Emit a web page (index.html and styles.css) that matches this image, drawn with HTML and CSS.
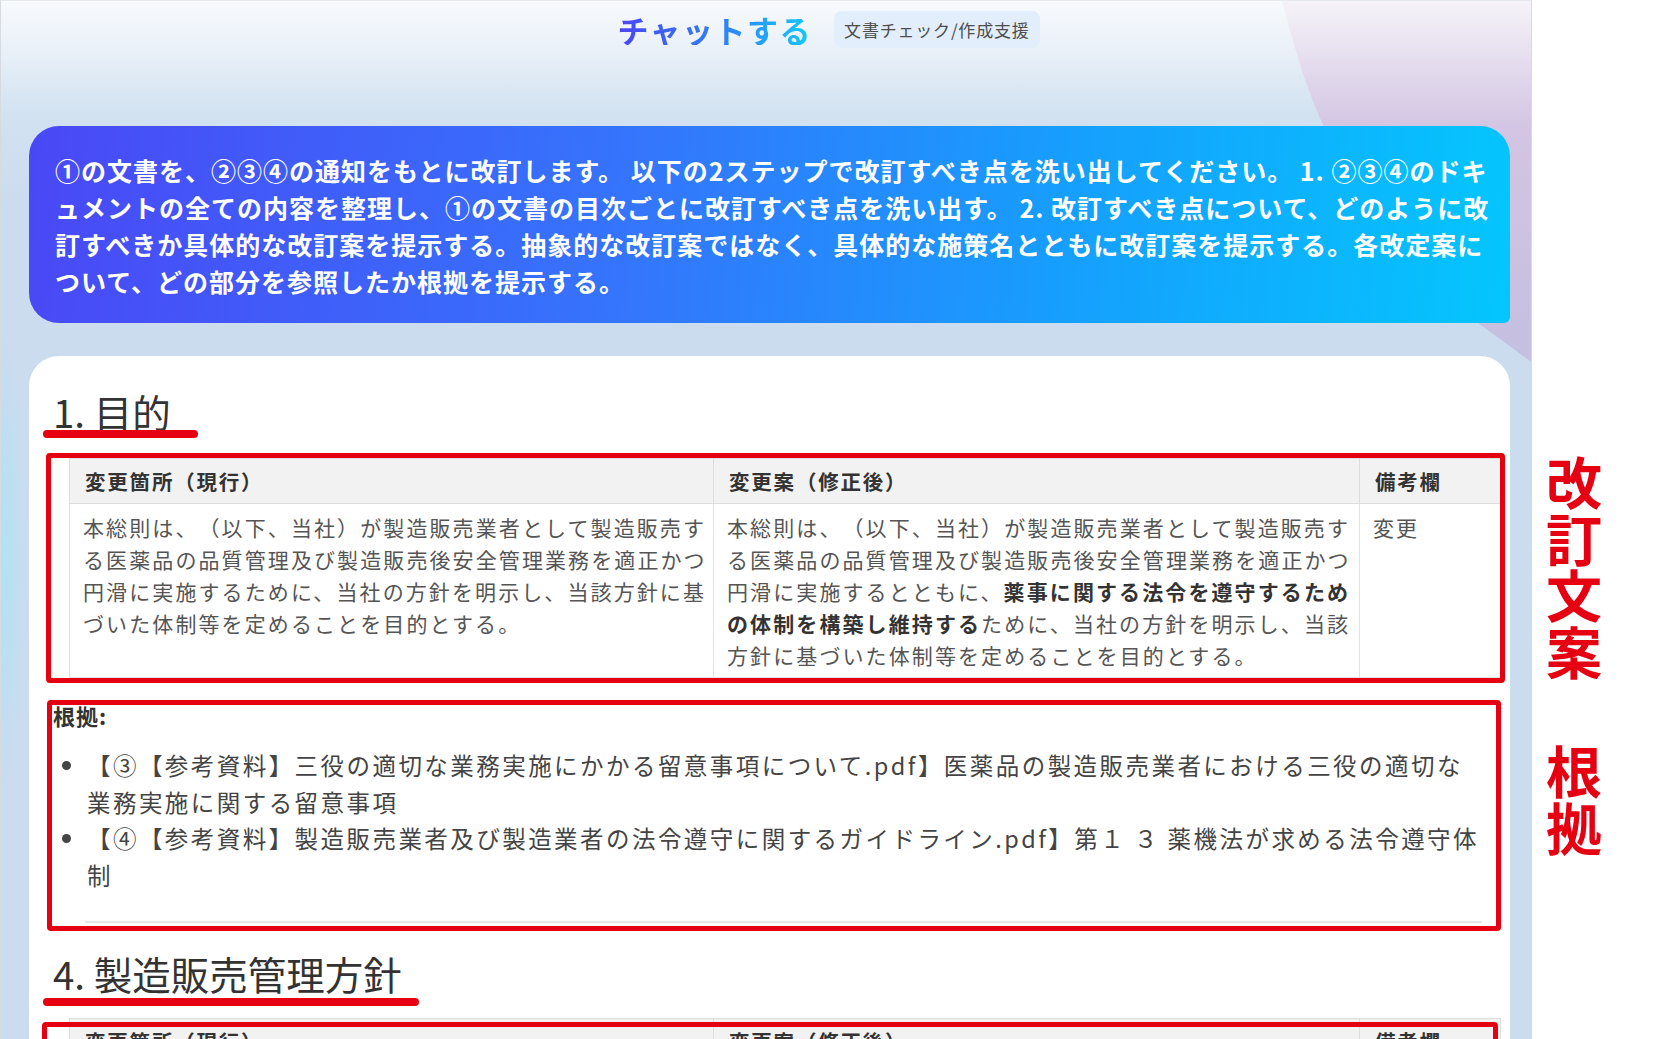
FILE: index.html
```html
<!DOCTYPE html>
<html lang="ja">
<head>
<meta charset="utf-8">
<title>チャットする</title>
<link rel="stylesheet" href="styles.css">
</head>
<body>
<div class="page">
  <main class="app">
    <svg class="app-deco" viewBox="0 0 1532 400" width="1532" height="400" aria-hidden="true">
      <defs>
        <linearGradient id="lav" x1="0" y1="0" x2="0" y2="362" gradientUnits="userSpaceOnUse">
          <stop offset="0" stop-color="#f5f3f8"/>
          <stop offset="0.35" stop-color="#d3c5e3"/>
          <stop offset="1" stop-color="#c4bfe0"/>
        </linearGradient>
      </defs>
      <path d="M1281 0 C1293 45 1306 92 1326 132 L1440 295 L1532 362 L1532 0 Z" fill="url(#lav)"/>
    </svg>

    <header class="topbar">
      <h1 class="title">チャットする</h1>
      <span class="mode-pill">文書チェック/作成支援</span>
    </header>

    <div class="user-msg">
      <p>①の文書を、②③④の通知をもとに改訂します。 以下の2ステップで改訂すべき点を洗い出してください。 1. ②③④のドキ<br>ュメントの全ての内容を整理し、①の文書の目次ごとに改訂すべき点を洗い出す。 2. 改訂すべき点について、どのように改<br>訂すべきか具体的な改訂案を提示する。抽象的な改訂案ではなく、具体的な施策名とともに改訂案を提示する。各改定案に<br>ついて、どの部分を参照したか根拠を提示する。</p>
    </div>

    <article class="answer">
      <h2 class="sec-title sec-title--purpose">1. 目的</h2>

      <div class="revision">
        <table class="rev-table">
          <colgroup><col class="c-old"><col class="c-new"><col class="c-note"></colgroup>
          <thead>
            <tr><th>変更箇所（現行）</th><th>変更案（修正後）</th><th>備考欄</th></tr>
          </thead>
          <tbody>
            <tr>
              <td>本総則は、（以下、当社）が製造販売業者として製造販売す<br>る医薬品の品質管理及び製造販売後安全管理業務を適正かつ<br>円滑に実施するために、当社の方針を明示し、当該方針に基<br>づいた体制等を定めることを目的とする。</td>
              <td>本総則は、（以下、当社）が製造販売業者として製造販売す<br>る医薬品の品質管理及び製造販売後安全管理業務を適正かつ<br>円滑に実施するとともに、<strong>薬事に関する法令を遵守するため<br>の体制を構築し維持する</strong>ために、当社の方針を明示し、当該<br>方針に基づいた体制等を定めることを目的とする。</td>
              <td>変更</td>
            </tr>
          </tbody>
        </table>
      </div>

      <section class="basis">
        <p class="basis-label">根拠:</p>
        <ul class="basis-list">
          <li>【③【参考資料】三役の適切な業務実施にかかる留意事項について.pdf】医薬品の製造販売業者における三役の適切な<br>業務実施に関する留意事項</li>
          <li>【④【参考資料】製造販売業者及び製造業者の法令遵守に関するガイドライン.pdf】第１ ３ 薬機法が求める法令遵守体<br>制</li>
        </ul>
        <div class="basis-rule"></div>
      </section>

      <h2 class="sec-title sec-title--policy">4. 製造販売管理方針</h2>

      <div class="revision revision--next">
        <table class="rev-table">
          <colgroup><col class="c-old"><col class="c-new"><col class="c-note"></colgroup>
          <thead>
            <tr><th>変更箇所（現行）</th><th>変更案（修正後）</th><th>備考欄</th></tr>
          </thead>
          <tbody>
            <tr><td></td><td></td><td></td></tr>
          </tbody>
        </table>
      </div>
    </article>
  </main>

  <aside class="side-notes">
    <div class="note-label">改訂文案</div>
    <div class="note-label">根拠</div>
  </aside>
</div>
</body>
</html>
```

FILE: styles.css
```css
* {
  box-sizing: border-box;
}

html,
body {
  margin: 0;
  padding: 0;
  background: #ffffff;
}

body {
  width: 1663px;
  height: 1039px;
  overflow: hidden;
  font-family: "Noto Sans CJK JP", "Noto Sans", sans-serif;
  text-spacing-trim: space-all;
  color: #333333;
}

.page {
  display: flex;
  height: 1039px;
}

/* ---------- app window ---------- */
.app {
  position: relative;
  flex: none;
  width: 1532px;
  height: 1039px;
  overflow: hidden;
  padding: 0 21px 0 28px;
  border-left: 1px solid #d6dbe2;
  border-right: 1px solid #d6dbe2;
  border-top: 1px solid #e6e9ee;
  background:
    radial-gradient(ellipse 26px 230px at 0 560px, #aee3f3 0%, rgba(174, 227, 243, 0) 100%),
    linear-gradient(180deg, #f8fafd 0px, #e7eff7 55px, #d2e2f1 112px, #cbdcee 200px, #cbdcee 100%);
}

.app-deco {
  position: absolute;
  top: 0;
  left: 0;
  display: block;
}

.topbar,
.user-msg,
.answer {
  position: relative;
  z-index: 1;
}

.topbar {
  display: flex;
  align-items: center;
  justify-content: center;
  gap: 22px;
  height: 56px;
  padding-left: 118px;
}

.title {
  margin: 0;
  font-size: 31px;
  font-weight: 700;
  line-height: 1;
  letter-spacing: 1.5px;
  background: linear-gradient(90deg, #4c45f2 0%, #2f83f6 55%, #14c9f8 100%);
  -webkit-background-clip: text;
  background-clip: text;
  color: transparent;
}

.mode-pill {
  display: flex;
  align-items: center;
  height: 37px;
  padding: 0 10px;
  border-radius: 8px;
  background: #e2eefb;
  color: #4d4d4d;
  font-size: 17px;
  letter-spacing: 0.8px;
}

/* ---------- user message ---------- */
.user-msg {
  margin-top: 69px;
  padding: 26px 20px 23px 26px;
  border-radius: 30px 30px 6px 30px;
  background: linear-gradient(95deg, #4a48f6 0%, #3574fc 40%, #169ffd 70%, #04c6fd 100%);
  color: #ffffff;
}

.user-msg p {
  margin: 0;
  font-size: 25px;
  font-weight: 700;
  line-height: 37px;
  letter-spacing: 1px;
  white-space: nowrap;
}

/* ---------- answer card ---------- */
.answer {
  margin-top: 33px;
  padding: 33px 24px 40px 24px;
  border-radius: 30px 30px 0 0;
  background: #ffffff;
}

.sec-title {
  position: relative;
  margin: 0;
  font-size: 38.5px;
  font-weight: 400;
  line-height: 44px;
  color: #333333;
}

.sec-title::after {
  content: "";
  position: absolute;
  left: -10px;
  height: 8px;
  border-radius: 4px;
  background: #e50012;
}

.sec-title--purpose::after {
  bottom: -5px;
  width: 155px;
}

.sec-title--policy {
  margin-top: 28px;
}

.sec-title--policy::after {
  bottom: -11px;
  width: 376px;
}

/* revision table */
.revision {
  position: relative;
  width: 1431px;
  margin: 25px 0 0 16px;
}

.revision::after {
  content: "";
  position: absolute;
  top: -5px;
  left: -23px;
  right: -5px;
  bottom: -5px;
  border: 5px solid #e50012;
  border-radius: 4px;
  pointer-events: none;
}

.revision--next {
  margin-top: 23px;
}

.revision--next::after {
  top: 4px;
  left: -27px;
  right: 2px;
}

.rev-table {
  width: 100%;
  border-collapse: collapse;
  table-layout: fixed;
}

.c-old {
  width: 644px;
}

.c-new {
  width: 646px;
}

.c-note {
  width: 141px;
}

.rev-table th {
  height: 45px;
  padding: 0 13px 0 15px;
  border: 1px solid #dddddd;
  background: #f2f2f2;
  text-align: left;
  font-size: 20.5px;
  font-weight: 700;
  letter-spacing: 1.8px;
  color: #333333;
}

.rev-table td {
  padding: 7px 13px 6px 13px;
  border: 1px solid #e2e2e2;
  vertical-align: top;
  font-size: 21px;
  line-height: 32px;
  letter-spacing: 2.1px;
  color: #555555;
  white-space: nowrap;
}

.rev-table td strong {
  font-weight: 700;
  color: #333333;
}

/* basis section */
.basis {
  position: relative;
  margin-top: 27px;
}

.basis::after {
  content: "";
  position: absolute;
  top: -5px;
  left: -6px;
  right: -15px;
  bottom: -8px;
  border: 5px solid #e50012;
  border-radius: 4px;
  pointer-events: none;
}

.basis-label {
  margin: 0;
  font-size: 22px;
  font-weight: 700;
  line-height: 20px;
  letter-spacing: 1px;
  color: #333333;
}

.basis-list {
  margin: 22px 0 0 0;
  padding-left: 34px;
  font-size: 23.5px;
  line-height: 36.7px;
  letter-spacing: 2.45px;
  color: #444444;
}

.basis-list li {
  white-space: nowrap;
}

.basis-list li::marker {
  letter-spacing: 0;
}

.basis-rule {
  height: 2px;
  margin: 27px 4px 0 32px;
  background: #e6e6e6;
}

/* ---------- side annotations ---------- */
.side-notes {
  flex: 1;
  display: flex;
  flex-direction: column;
  align-items: center;
  gap: 63px;
  padding: 455px 48px 0 0;
}

.note-label {
  writing-mode: vertical-rl;
  font-size: 56px;
  font-weight: 700;
  line-height: 1;
  letter-spacing: 0.5px;
  color: #e50012;
}
```
